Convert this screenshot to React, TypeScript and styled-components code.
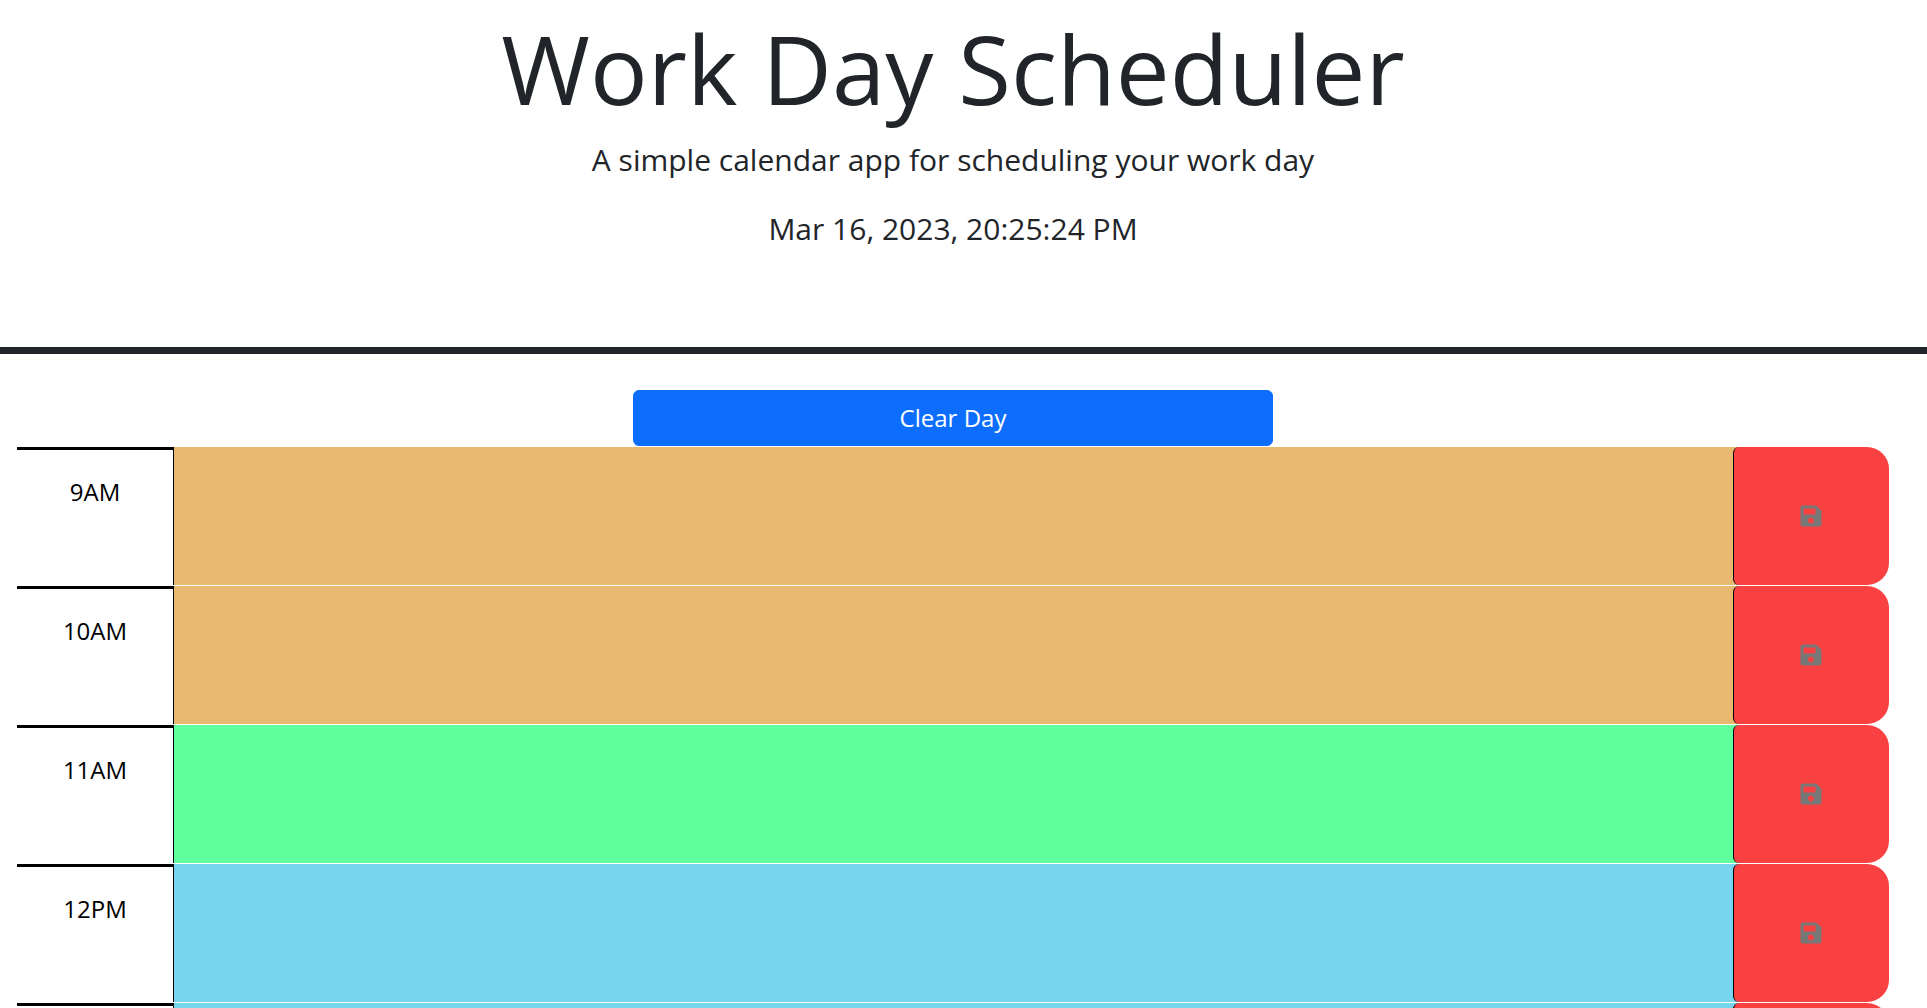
import React from "react";
import styled, { createGlobalStyle } from "styled-components";
import { FaSave } from "react-icons/fa";

const GlobalStyle = createGlobalStyle`
  *, *::before, *::after { box-sizing: border-box; }
  body {
    margin: 0;
    background: #fff;
    color: #212529;
    font-family: "Open Sans", "Liberation Sans", sans-serif;
    font-size: 24px;
    line-height: 36px;
  }
`;

const Page = styled.div`
  height: 100vh;
  overflow: hidden;
`;

const Header = styled.header`
  padding: 10px 21px 96px 0;
  border-bottom: 7px solid #212529;
  text-align: center;
`;

const Title = styled.h1`
  margin: 0 0 12px;
  font-size: 96px;
  font-weight: 400;
  line-height: 115px;
`;

const Lead = styled.p`
  margin: 0 0 24px;
  font-size: 30px;
  line-height: 45px;
  &:last-child { margin-bottom: 0; }
`;

const Main = styled.main`
  padding: 36px 38px 0 17px;
`;

const ClearButton = styled.button`
  display: block;
  width: 640px;
  margin: 0 auto 1px;
  padding: 9px 18px;
  border: 1px solid #0d6efd;
  border-radius: 6px;
  background: #0d6efd;
  color: #fff;
  font: inherit;
`;

const Row = styled.section`
  display: grid;
  grid-template-columns: 1fr 10fr 1fr;
  height: 138px;
  margin-bottom: 1px;
`;

const Hour = styled.label`
  padding-top: 24px;
  border-top: 3px solid #000;
  color: #000;
  text-align: center;
`;

const tones = { past: "#e9b971", present: "#62ff9e", future: "#77d5ee" };

const Entry = styled.textarea<{ $tone: keyof typeof tones }>`
  width: 100%;
  height: 100%;
  padding: 3px;
  border: 0;
  border-left: 1px solid #000;
  outline: 0;
  resize: none;
  background: ${(p) => tones[p.$tone]};
  color: #000;
  font: inherit;
`;

const SaveCell = styled.div<{ $tone: keyof typeof tones }>`
  background: linear-gradient(to right, ${(p) => tones[p.$tone]} 50%, #fff 50%);
`;

const SaveButton = styled.button`
  display: grid;
  place-items: center;
  width: 100%;
  height: 100%;
  padding: 0 1px 0 0;
  border: 0;
  border-left: 1px solid #000;
  border-radius: 6px 22px 22px 6px;
  background: #f94141;
  color: #777;
`;

const hours: { label: string; tone: keyof typeof tones }[] = [
  { label: "9AM", tone: "past" },
  { label: "10AM", tone: "past" },
  { label: "11AM", tone: "present" },
  { label: "12PM", tone: "future" },
  { label: "1PM", tone: "future" },
];

export default function App() {
  return (
    <Page>
      <GlobalStyle />
      <Header>
        <Title>Work Day Scheduler</Title>
        <Lead>A simple calendar app for scheduling your work day</Lead>
        <Lead>Mar 16, 2023, 20:25:24 PM</Lead>
      </Header>
      <Main>
        <ClearButton type="button">Clear Day</ClearButton>
        {hours.map(({ label, tone }) => (
          <Row key={label}>
            <Hour htmlFor={`entry-${label}`}>{label}</Hour>
            <Entry id={`entry-${label}`} $tone={tone} />
            <SaveCell $tone={tone}>
              <SaveButton type="button" aria-label={`Save ${label}`}>
                <FaSave size={24} />
              </SaveButton>
            </SaveCell>
          </Row>
        ))}
      </Main>
    </Page>
  );
}
